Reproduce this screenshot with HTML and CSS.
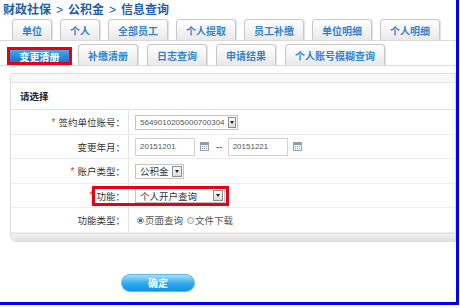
FILE: index.html
```html
<!DOCTYPE html>
<html lang="zh">
<head>
  <meta charset="UTF-8" />
  <title>信息查询</title>
  <link rel="stylesheet" href="styles.css">
</head>
<body>
  <div class="frame">
    <div class="crumb">财政社保<span class="sep">&gt;</span>公积金<span class="sep">&gt;</span>信息查询</div>

    <div class="tabs tabs-top">
      <span class="tab">单位</span>
      <span class="tab">个人</span>
      <span class="tab">全部员工</span>
      <span class="tab">个人提取</span>
      <span class="tab">员工补缴</span>
      <span class="tab">单位明细</span>
      <span class="tab">个人明细</span>
    </div>

    <div class="tabs tabs-sub">
      <span class="mark"><span class="tab-on">变更清册</span></span>
      <span class="tab">补缴清册</span>
      <span class="tab">日志查询</span>
      <span class="tab">申请结果</span>
      <span class="tab">个人账号模糊查询</span>
    </div>

    <div class="panel">
      <div class="panel-top"></div>
      <div class="panel-title">请选择</div>
      <div class="form">
        <div class="row">
          <div class="label"><i class="req">*</i>签约单位账号：</div>
          <div class="value">
            <span class="select select-long"><span class="num">5649010205000700304</span><span class="select-btn"></span></span>
          </div>
        </div>
        <div class="row">
          <div class="label">变更年月：</div>
          <div class="value">
            <span class="date"><span class="num">20151201</span></span>
            <svg class="cal" width="9" height="9" viewBox="0 0 9 9">
              <rect x="0.5" y="0.5" width="8" height="8" fill="#f4f6f8" stroke="#9aa3ad"/>
              <rect x="1" y="1" width="7" height="2" fill="#7f9bb8"/>
              <path d="M2 4.5h1M4 4.5h1M6 4.5h1M2 6.5h1M4 6.5h1M6 6.5h1" stroke="#8ea0b3"/>
            </svg>
            <span class="dash">--</span>
            <span class="date"><span class="num">20151221</span></span>
            <svg class="cal" width="9" height="9" viewBox="0 0 9 9">
              <rect x="0.5" y="0.5" width="8" height="8" fill="#f4f6f8" stroke="#9aa3ad"/>
              <rect x="1" y="1" width="7" height="2" fill="#7f9bb8"/>
              <path d="M2 4.5h1M4 4.5h1M6 4.5h1M2 6.5h1M4 6.5h1M6 6.5h1" stroke="#8ea0b3"/>
            </svg>
          </div>
        </div>
        <div class="row">
          <div class="label"><i class="req">*</i>账户类型：</div>
          <div class="value">
            <span class="select"><span class="opt">公积金</span><span class="select-btn"></span></span>
          </div>
        </div>
        <div class="row">
          <div class="label"><i class="req">*</i>功能：</div>
          <div class="value">
            <span class="select select-func"><span class="opt">个人开户查询</span><span class="select-btn"></span></span>
          </div>
        </div>
        <div class="row">
          <div class="label">功能类型：</div>
          <div class="value">
            <span class="radio radio-on"></span><span class="radio-text">页面查询</span>
            <span class="radio"></span><span class="radio-text">文件下载</span>
          </div>
        </div>
        <div class="mark-box"></div>
      </div>
      <div class="panel-foot"></div>
    </div>

    <div class="actions">
      <button class="btn">确定</button>
    </div>
  </div>
</body>
</html>
```

FILE: styles.css
```css
* { box-sizing: border-box; }
body {
  margin: 0;
  background: #fff;
  font-family: "Noto Sans CJK SC", "Liberation Sans", sans-serif;
  color: #333;
}
.frame {
  width: 459px;
  height: 305px;
  border-right: 3px solid #0000fe;
  border-bottom: 3px solid #0000fe;
  overflow: hidden;
}
.crumb {
  height: 17px;
  line-height: 17px;
  padding-left: 3px;
  font-size: 12px;
  font-weight: bold;
  color: #1f5ea8;
  white-space: nowrap;
}
.sep {
  margin: 0 5px;
  font-family: "Liberation Sans", sans-serif;
  font-weight: normal;
}
.tabs {
  display: flex;
  align-items: flex-end;
  border-bottom: 1px solid #dadada;
}
.tabs-top {
  height: 24px;
  gap: 8px;
  padding-left: 12px;
}
.tabs-sub {
  height: 22px;
  margin-top: 3px;
  gap: 9px;
  padding-left: 7px;
}
.tab {
  height: 21px;
  min-width: 40px;
  padding: 0 9px;
  display: flex;
  align-items: center;
  justify-content: center;
  border: 1px solid #c8c8c8;
  border-bottom: none;
  border-radius: 4px 4px 0 0;
  background: linear-gradient(#ffffff, #e9e9e9);
  box-shadow: 1px 0 0 #e2e2e2;
  font-size: 10px;
  font-weight: bold;
  color: #3583cf;
  white-space: nowrap;
}
.mark {
  width: 65px;
  height: 18px;
  border: 3px solid #e60012;
  margin-right: -3px;
  display: flex;
}
.tab-on {
  flex: 1;
  display: flex;
  align-items: center;
  justify-content: center;
  background: linear-gradient(#4aa8ee, #1676cc);
  font-size: 10px;
  font-weight: bold;
  color: #fff;
}
.panel {
  margin: 7px 0 0 10px;
  width: 446px;
  border: 1px solid #dedede;
  border-bottom: none;
  border-radius: 4px 0 0 6px;
  overflow: hidden;
}
.panel-top {
  height: 9px;
  background: #f7f7f7;
  border-bottom: 1px solid #e6e6e6;
}
.panel-title {
  height: 27px;
  line-height: 26px;
  padding-left: 9px;
  font-size: 9.5px;
  font-weight: bold;
  color: #222;
  border-bottom: 1px solid #e2e2e2;
}
.form {
  position: relative;
}
.row {
  display: grid;
  grid-template-columns: 118px 1fr;
  height: 25px;
  border-bottom: 1px solid #ececec;
}
.row:nth-child(even) {
  height: 24px;
}
.label {
  display: flex;
  align-items: center;
  justify-content: flex-end;
  padding-right: 3px;
  border-right: 1px solid #e4e4e4;
  font-size: 9.5px;
  color: #333;
  white-space: nowrap;
}
.req {
  font-style: normal;
  font-family: "Liberation Sans", sans-serif;
  font-size: 10px;
  color: #e4393c;
  margin-right: 3px;
}
.value {
  display: flex;
  align-items: center;
  padding-left: 6px;
  white-space: nowrap;
}
.num {
  font-family: "Liberation Sans", sans-serif;
  font-size: 8px;
  color: #555;
}
.opt {
  font-size: 9.5px;
  color: #333;
}
.select {
  height: 15px;
  display: inline-flex;
  align-items: center;
  gap: 3px;
  padding: 0 1px 0 4px;
  border: 1px solid #c4c4c4;
  background: #fff;
}
.select-long { width: 103px; }
.select-func { width: 90px; }
.select-btn {
  width: 10px;
  height: 11px;
  margin-left: auto;
  border: 1px solid #8d8d8d;
  background: linear-gradient(#fafafa, #dcdcdc);
  display: flex;
  align-items: center;
  justify-content: center;
}
.select-btn::after {
  content: "";
  border-top: 3px solid #222;
  border-left: 2.5px solid transparent;
  border-right: 2.5px solid transparent;
}
.date {
  width: 60px;
  height: 18px;
  display: inline-flex;
  align-items: center;
  padding-left: 4px;
  border: 1px solid #d2d2d2;
}
.cal { margin-left: 5px; }
.dash {
  margin: 0 5px 0 7px;
  font-family: "Liberation Sans", sans-serif;
  font-size: 10px;
  color: #555;
}
.radio {
  width: 7px;
  height: 7px;
  margin: 0 1px 0 2px;
  border: 1px solid #9a9a9a;
  border-radius: 50%;
  background: #f3f3f3;
}
.radio-on {
  background: radial-gradient(circle, #2c6fc4 0 1.6px, #eef3fa 2px);
  border-color: #7890ad;
}
.radio-text {
  font-size: 9.5px;
  color: #555;
  margin-right: 2px;
}
.mark-box {
  position: absolute;
  left: 81px;
  top: 76px;
  width: 137px;
  height: 20px;
  border: 3px solid #e60012;
}
.panel-foot {
  height: 9px;
  background: linear-gradient(#f1f1f1, #dedede);
  border-top: 1px solid #e3e3e3;
}
.actions {
  padding: 26px 0 0 121px;
}
.btn {
  width: 74px;
  height: 18px;
  padding: 0;
  border: 1px solid #63b6e6;
  border-radius: 9px;
  background: linear-gradient(#a6def9, #2ea9ef 55%, #0b96e3);
  font-family: "Noto Sans CJK SC", sans-serif;
  font-size: 10px;
  font-weight: bold;
  color: #fff;
}
```
